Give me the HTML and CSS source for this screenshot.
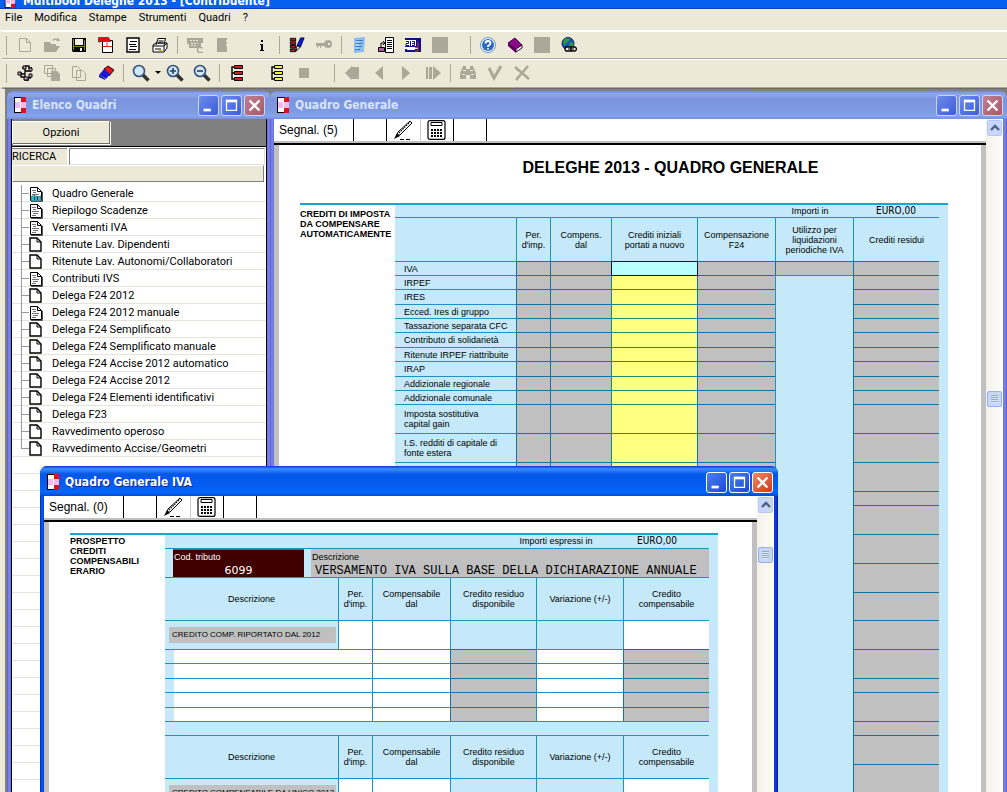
FILE: index.html
```html
<!DOCTYPE html>
<html lang="it">
<head>
<meta charset="utf-8">
<title>Multibool Deleghe 2013 - [Contribuente]</title>
<link rel="stylesheet" href="styles.css">
</head>
<body>
<svg class="defs" aria-hidden="true">
  <symbol id="logo" viewBox="0 0 12 16"><path fill="#000" d="M0 0h12v16H0z"/><path fill="#fff" d="M1 1h10v14H1z"/><path fill="#e01020" d="M7 0h5v5H7zM7 11h5v5H7z"/><path fill="#f6b8ea" d="M1 5h11v6H1z"/><path fill="#fff" d="M6 1h1v14H6z"/></symbol>
  <symbol id="min" viewBox="0 0 21 21"><path fill="#fff" d="M5 14h8v3H5z"/></symbol>
  <symbol id="max" viewBox="0 0 21 21"><path fill="none" stroke="#fff" stroke-width="1.400" d="M5 5h11v11H5z"/><path fill="#fff" d="M4.300 4h12.400v3H4.300z"/></symbol>
  <symbol id="close" viewBox="0 0 21 21"><path stroke="#fff" stroke-width="2.600" d="M5 5l11 11m0-11l-11 11"/></symbol>
  <symbol id="page" viewBox="0 0 14 16"><path fill="#fff" stroke="#000" stroke-width="1.400" d="M1 1h7l4 4v9H1z"/><path fill="none" stroke="#000" d="M8 1v4h4"/></symbol>
  <symbol id="text" viewBox="0 0 14 16"><path fill="#fff" stroke="#000" d="M1.500 1.500h7l4 4v9h-11z"/><path fill="none" stroke="#000" d="M8.500 1.500v4h4"/><path fill="none" stroke="#555" d="M13.500 6v9.500H2"/><path stroke="#777" d="M3 4.500h4M4 6.500h3M3 8.500h7M4 10.500h5M3 12.500h4"/></symbol>
  <symbol id="pencil" viewBox="0 0 20 20"><path fill="#fff" stroke="#000" d="M3 15l1-3L16 1l2 2L6 15z"/><path stroke="#000" stroke-width="1.200" stroke-dasharray="1.500 1" d="M5 13L16 2"/><path fill="#000" d="M0 19l3-6 3 3z"/><path stroke="#000" d="M6 19.500h4m2 0h4"/></symbol>
  <symbol id="calc" viewBox="0 0 20 20"><rect x="1" y="0.600" width="17" height="18.800" rx="2" fill="#fff" stroke="#000" stroke-width="1.200"/><path fill="none" stroke="#000" d="M4 2.500h11v3H4z"/><path stroke="#000" stroke-width="2" stroke-dasharray="2 1" d="M4 10h11M4 13h11M4 16h11"/></symbol>
  <symbol id="up" viewBox="0 0 10 8"><path fill="none" stroke="#4d6185" stroke-width="2.400" d="M1 6l4-4 4 4"/></symbol>
  <symbol id="zoom" viewBox="0 0 18 18"><path stroke="#333" stroke-width="3.500" d="M11 11l5.500 5.500"/><circle cx="7" cy="7" r="5.500" fill="#cfe6fb" stroke="#33507a" stroke-width="1.600"/></symbol>
  <symbol id="square" viewBox="0 0 16 16"><path fill="#aca899" d="M0 0h16v16H0z"/></symbol>
  <symbol id="rack" viewBox="0 0 16 16"><path fill="none" stroke="#000" stroke-width="1.400" d="M5 2H3v12h2M3 8h2"/><path fill="currentColor" stroke="#000" d="M5.500.500h8v3h-8zM5.500 6.500h8v3h-8zM5.500 12.500h8v3h-8z"/></symbol>
</svg>

<header class="app-title"><svg class="app-logo"><use href="#logo"/></svg><span>Multibool Deleghe 2013 - [Contribuente]</span></header>

<nav class="menu">
  <button>File</button><button>Modifica</button><button>Stampe</button><button>Strumenti</button><button>Quadri</button><button>?</button>
</nav>

<div class="toolbar" role="toolbar" aria-label="Principale">
  <button aria-label="Nuovo"><svg viewBox="0 0 16 16"><path fill="none" stroke="#aca899" d="M2.500 1.500h7l4 4v9h-11zM9.500 1.500v4h4"/></svg></button>
  <button aria-label="Apri"><svg viewBox="0 0 16 16"><path fill="#aca899" d="M0 5h6l1 2h5v2h4l-4 6H0zM8 3q3-3 6-1V0l2 4h-4l1-1q-2-1-4 1z"/></svg></button>
  <button aria-label="Salva"><svg viewBox="0 0 16 16"><path fill="#000" d="M1 1h14v14H2l-1-1z"/><path fill="#8a8a18" d="M2 2h1v11H2zM13 3h1v10h-1zM3 9h10v1H3z"/><path fill="#f3f1e4" d="M4 2h8v6H4zM9 11h2v3H9z"/></svg></button>
  <button aria-label="PDF"><svg viewBox="0 0 16 16"><path fill="#fff" stroke="#000" d="M4.500 3.500h10v12h-10z"/><path fill="#e01010" stroke="#600" stroke-width=".6" d="M.500.500h10l2 4H4L.500 5z"/><path fill="none" stroke="#d22" d="M5 9.500h9m-5-4v4"/></svg></button>
  <button aria-label="Elenco"><svg viewBox="0 0 16 16"><path fill="#fff" stroke="#000" stroke-width="1.400" d="M2 1h12v14H2z"/><path stroke="#000" d="M5 4.500h7M4 7.500h7M5 9.500h7M4 12.500h7"/></svg></button>
  <button aria-label="Stampa"><svg viewBox="0 0 16 16"><path fill="#fff" stroke="#000" d="M4 8l2-6.500h7.500L12 8M1 8l3-2h11v5l-3 4H1z"/><path fill="none" stroke="#000" d="M1 9h11v5m0-5l3-3M6.500 4h5M6 6h5M3 12h6"/><path stroke="#bb0" d="M7 13.500h3"/></svg></button>
  <i class="sep"></i>
  <button aria-label="Calcola"><svg viewBox="0 0 16 16"><path fill="#aca899" d="M0 1h16v5h-2v5H2V7H0z"/><path stroke="#ece9d8" d="M3 3.500h9M4 6.500h7M4 8.500h6" stroke-dasharray="2 1"/><path fill="none" stroke="#aca899" stroke-width="1.500" d="M15.500 11q-5-2-5 2t5 2"/></svg></button>
  <button aria-label="Registro"><svg viewBox="0 0 16 16"><path fill="#aca899" d="M3 1h10v2h-1v2h1v2h-1v2h1v6H3z"/></svg></button>
  <i class="gap"></i>
  <button aria-label="Informazioni"><svg viewBox="0 0 16 16"><path fill="#000" d="M7 3h2v2H7zM6 7h3v6h1v1H6v-1h1V8H6z"/></svg></button>
  <i class="sep"></i>
  <button aria-label="Modifica elenco"><svg viewBox="0 0 18 18"><path fill="#b02020" stroke="#000" d="M1.500 1.500h6v3h-6zM1.500 5.500h6v3h-6zM1.500 9.500h6v3h-6zM1.500 13.500h6v3h-6z"/><path fill="#1018d8" stroke="#000060" d="M13 1h4l-4 10-4-1z"/><path fill="#fff" stroke="#000" d="M9 10l4 1-5 5z"/></svg></button>
  <button aria-label="Chiave"><svg viewBox="0 0 16 16"><path fill="#aca899" fill-rule="evenodd" d="M0 6h8q1-3 4-3 4 0 4 4t-4 4q-3 0-4-2H5v2H4V9H2v2H1V9H0zM12 6v2h2V6z"/></svg></button>
  <i class="sep"></i>
  <button aria-label="Archivio"><svg viewBox="0 0 16 16"><path fill="#8fbdf0" d="M3 1l11-1-1 15-10 1z"/><path stroke="#3a78c8" d="M5 3.500h7M4.500 6.500h7M4 9.500h7M4 12.500h5"/><path stroke="#d5e8fc" d="M5 5h3M5 8h3m-4 3h3"/></svg></button>
  <button aria-label="Documento"><svg viewBox="0 0 16 16"><path fill="#fff" stroke="#000" d="M7.500.500h8v15h-8z"/><path stroke="#000" d="M9 3.500h5M9 5.500h5M9 7.500h5M9 9.500h5M9 11.500h5"/><path fill="#b060a0" stroke="#000" d="M.500 10.500h6v4h-6z"/><path fill="none" stroke="#000" d="M3 10V6h4M5 4l2 2-2 2"/></svg></button>
  <button aria-label="Codici"><svg viewBox="0 0 16 16"><path fill="#10108a" d="M0 1h16v14H0z"/><path fill="#fff" d="M0 3h11v6H0zM0 10h13v2H0zM2 12h8v1H2z"/><path fill="none" stroke="#10108a" d="M1 4.500h2.500v2H1v2h3M5.500 4v5M7 4.500h2.500v4H7m0-2h3"/><path fill="none" stroke="#e03030" d="M10 10.500h3V5M10 14h3v-3"/></svg></button>
  <button aria-label="Vuoto"><svg><use href="#square"/></svg></button>
  <i class="gap"></i>
  <i class="sep"></i>
  <button aria-label="Guida"><svg viewBox="0 0 16 16"><circle cx="8" cy="8" r="7.500" fill="#fff" stroke="#5f92d4"/><circle cx="8" cy="8" r="6" fill="#2a68c6"/><path fill="none" stroke="#fff" stroke-width="1.800" d="M5.500 6.500q0-2.500 2.500-2.500t2.500 2Q10.500 7.500 8 9v1m0 1v1.500"/></svg></button>
  <button aria-label="Manuale"><svg viewBox="0 0 16 16"><path fill="#8a0a8a" stroke="#400040" d="M1 6l7-5 7 7-6 4z"/><path fill="#fff" stroke="#303" d="M9 12l6-4v3l-6 4z"/><path fill="#5a005a" d="M1 6l8 6v4L1 9z"/></svg></button>
  <button aria-label="Vuoto"><svg><use href="#square"/></svg></button>
  <button aria-label="Internet"><svg viewBox="0 0 16 16"><circle cx="7" cy="6.500" r="6" fill="#1c50c0" stroke="#102060"/><path fill="#2a9a3a" d="M3 2q4-2 6 0L7 5 5 6 4 9 2 6zM9 5l4 1-2 5-3-2z"/><path fill="#ece9d8" stroke="#000" stroke-width="1.300" d="M5 10h5v4H5q-2-2 0-4zM10 10h4q3 2 0 4h-4z"/><path stroke="#000" d="M7 12h6"/></svg></button>
</div>

<div class="toolbar" role="toolbar" aria-label="Quadri">
  <button aria-label="Struttura"><svg viewBox="0 0 16 16"><path fill="none" stroke="#000" stroke-width="1.300" d="M5 3h3v3h6M8 6v7h6M8 9H4m4-8h4v2h3M4 7v5h4v3h4"/><path fill="#c9a0c9" stroke="#000" d="M1 7h3v3H1zM6 1h3v3H6zM12 3h3v3h-3zM12 9h3v3h-3zM7 12h4v3H7z"/></svg></button>
  <button aria-label="Copia tutto"><svg viewBox="0 0 16 16"><path fill="#ece9d8" stroke="#aca899" d="M.500.500h8v8h-8zM3.500 3.500h8v8h-8z"/><path fill="#aca899" d="M7 6h6l3 3v7H7z"/></svg></button>
  <button aria-label="Copia"><svg viewBox="0 0 16 16"><path fill="#ece9d8" stroke="#aca899" d="M1.500 1.500h5l3 3v8h-8zM5.500 5.500h6l3 3v7h-9z"/></svg></button>
  <button aria-label="Cancella"><svg viewBox="0 0 16 16"><path fill="#e01818" stroke="#300" d="M6 4l4-3 6 4-5 6z"/><path fill="#1818d8" d="M6 4l6 5-4 5-7-4z"/><path fill="#000080" d="M1 10l6 4v1l-6-3z"/></svg></button>
  <i class="sep"></i>
  <button aria-label="Zoom"><svg class="big"><use href="#zoom"/></svg></button>
  <button class="drop" aria-label="Opzioni zoom"></button>
  <button aria-label="Ingrandisci"><svg class="big" viewBox="0 0 18 18"><use href="#zoom"/><path stroke="#223f70" stroke-width="1.600" d="M4 7h6M7 4v6"/></svg></button>
  <button aria-label="Riduci"><svg class="big" viewBox="0 0 18 18"><use href="#zoom"/><path stroke="#223f70" stroke-width="1.600" d="M4 7h6"/></svg></button>
  <i class="sep"></i>
  <button class="red" aria-label="Elenco rosso"><svg><use href="#rack"/></svg></button>
  <i class="gap"></i>
  <button class="yellow-ink" aria-label="Elenco giallo"><svg><use href="#rack"/></svg></button>
  <button aria-label="Ferma"><svg class="small" viewBox="0 0 16 16"><use href="#square"/></svg></button>
  <i class="gap"></i>
  <i class="sep"></i>
  <button aria-label="Primo"><svg viewBox="0 0 16 16"><path fill="#aca899" d="M8 1v14L1 8zM8 2h7v12H8z"/></svg></button>
  <button aria-label="Precedente"><svg viewBox="0 0 16 16"><path fill="#aca899" d="M12 1v14L4 8z"/></svg></button>
  <button aria-label="Successivo"><svg viewBox="0 0 16 16"><path fill="#aca899" d="M4 1v14l8-7z"/></svg></button>
  <button aria-label="Ultimo"><svg viewBox="0 0 16 16"><path fill="#aca899" d="M1 2h2v12H1zM4 2h3v12H4zM8 1v14l8-7z"/></svg></button>
  <i class="sep"></i>
  <button aria-label="Cerca"><svg viewBox="0 0 16 16"><path fill="#aca899" d="M3 1h3v3h4V1h3l3 8v5h-6v-4H6v4H0V9z"/><path stroke="#ece9d8" d="M3 5.500h3m4 0h3M2 9.500h3m6 0h3"/></svg></button>
  <button aria-label="Conferma"><svg viewBox="0 0 16 16"><path fill="none" stroke="#aca899" stroke-width="3" d="M2 3l5 10 7-12"/></svg></button>
  <button aria-label="Annulla"><svg viewBox="0 0 16 16"><path stroke="#aca899" stroke-width="2.600" d="M1 2l14 12M14 1L2 15"/></svg></button>
</div>

<main class="desk">
  <section class="win win-list">
    <header class="bar"><svg class="logo"><use href="#logo"/></svg><h2>Elenco Quadri</h2>
      <button aria-label="Riduci a icona"><svg><use href="#min"/></svg></button><button aria-label="Ingrandisci"><svg><use href="#max"/></svg></button><button class="x" aria-label="Chiudi"><svg><use href="#close"/></svg></button></header>
    <div class="body list-body">
      <div class="options"><button>Opzioni</button></div>
      <div class="search"><label for="q">RICERCA</label><input id="q" type="text"></div>
      <div class="list-head"></div>
      <ul class="tree">
        <li><svg viewBox="0 0 14 16"><use href="#text"/><path fill="#30c0c8" stroke="#456" stroke-width=".7" d="M2 11l3-2 3 2 4-1v5H2z"/><path stroke="#127" d="M5.500 11v3m3-3v3"/></svg>Quadro Generale</li>
        <li><svg><use href="#text"/></svg>Riepilogo Scadenze</li>
        <li><svg><use href="#text"/></svg>Versamenti IVA</li>
        <li><svg><use href="#page"/></svg>Ritenute Lav. Dipendenti</li>
        <li><svg><use href="#page"/></svg>Ritenute Lav. Autonomi/Collaboratori</li>
        <li><svg><use href="#text"/></svg>Contributi IVS</li>
        <li><svg><use href="#page"/></svg>Delega F24 2012</li>
        <li><svg><use href="#text"/></svg>Delega F24 2012 manuale</li>
        <li><svg><use href="#page"/></svg>Delega F24 Semplificato</li>
        <li><svg><use href="#page"/></svg>Delega F24 Semplificato manuale</li>
        <li><svg><use href="#page"/></svg>Delega F24 Accise 2012 automatico</li>
        <li><svg><use href="#page"/></svg>Delega F24 Accise 2012</li>
        <li><svg><use href="#page"/></svg>Delega F24 Elementi identificativi</li>
        <li><svg><use href="#page"/></svg>Delega F23</li>
        <li><svg><use href="#page"/></svg>Ravvedimento operoso</li>
        <li><svg><use href="#page"/></svg>Ravvedimento Accise/Geometri</li>
      </ul>
    </div>
  </section>

  <section class="win win-main">
    <header class="bar"><svg class="logo"><use href="#logo"/></svg><h2>Quadro Generale</h2>
      <button aria-label="Riduci a icona"><svg><use href="#min"/></svg></button><button aria-label="Ingrandisci"><svg><use href="#max"/></svg></button><button class="x" aria-label="Chiudi"><svg><use href="#close"/></svg></button></header>
    <div class="body split">
      <div class="view">
        <div class="tools"><button class="segnal">Segnal. (5)</button><button aria-label="Vuoto"></button><button class="light" aria-label="Modifica"><svg><use href="#pencil"/></svg></button><button aria-label="Calcolatrice"><svg><use href="#calc"/></svg></button><button aria-label="Vuoto"></button></div>
        <div class="sheet sheet-main">
          <h1>DELEGHE 2013 - QUADRO GENERALE</h1>
          <div class="form">
            <h3 class="main-label">CREDITI DI IMPOSTA<br>DA COMPENSARE<br>AUTOMATICAMENTE</h3>
            <div class="panel">
              <div class="currency"><span>Importi in</span><b>EURO,00</b></div>
              <table class="grid credits">
                <colgroup><col class="c121"><col class="c34"><col class="c61"><col class="c86"><col class="c78"><col class="c78"><col class="c86"></colgroup>
                <thead><tr><th></th><th>Per.<br>d'imp.</th><th>Compens.<br>dal</th><th>Crediti iniziali<br>portati a nuovo</th><th>Compensazione<br>F24</th><th>Utilizzo per<br>liquidazioni<br>periodiche IVA</th><th>Crediti residui</th></tr></thead>
                <tbody>
                  <tr class="h14"><td>IVA</td><td class="g"></td><td class="g"></td><td class="active"><input aria-label="IVA"></td><td class="g"></td><td class="g"></td><td class="g"></td></tr>
                  <tr class="h14"><td>IRPEF</td><td class="g"></td><td class="g"></td><td class="y"><input aria-label="IRPEF"></td><td class="g"></td><td rowspan="26"></td><td class="g"></td></tr>
                  <tr class="h15"><td>IRES</td><td class="g"></td><td class="g"></td><td class="y"><input aria-label="IRES"></td><td class="g"></td><td class="g"></td></tr>
                  <tr class="h14"><td>Ecced. Ires di gruppo</td><td class="g"></td><td class="g"></td><td class="y"><input aria-label="Ecced. Ires di gruppo"></td><td class="g"></td><td class="g"></td></tr>
                  <tr class="h14"><td>Tassazione separata CFC</td><td class="g"></td><td class="g"></td><td class="y"><input aria-label="Tassazione separata CFC"></td><td class="g"></td><td class="g"></td></tr>
                  <tr class="h15"><td>Contributo di solidarietà</td><td class="g"></td><td class="g"></td><td class="y"><input aria-label="Contributo di solidarietà"></td><td class="g"></td><td class="g"></td></tr>
                  <tr class="h14"><td>Ritenute IRPEF riattribuite</td><td class="g"></td><td class="g"></td><td class="y"><input aria-label="Ritenute IRPEF riattribuite"></td><td class="g"></td><td class="g"></td></tr>
                  <tr class="h15"><td>IRAP</td><td class="g"></td><td class="g"></td><td class="y"><input aria-label="IRAP"></td><td class="g"></td><td class="g"></td></tr>
                  <tr class="h14"><td>Addizionale regionale</td><td class="g"></td><td class="g"></td><td class="y"><input aria-label="Addizionale regionale"></td><td class="g"></td><td class="g"></td></tr>
                  <tr class="h14"><td>Addizionale comunale</td><td class="g"></td><td class="g"></td><td class="y"><input aria-label="Addizionale comunale"></td><td class="g"></td><td class="g"></td></tr>
                  <tr class="h29"><td>Imposta sostitutiva<br>capital gain</td><td class="g"></td><td class="g"></td><td class="y"><input aria-label="Imposta sostitutiva capital gain"></td><td class="g"></td><td class="g"></td></tr>
                  <tr class="h29"><td>I.S. redditi di capitale di<br>fonte estera</td><td class="g"></td><td class="g"></td><td class="y"><input aria-label="I.S. redditi di capitale"></td><td class="g"></td><td class="g"></td></tr>
                  <tr class="h29"><td></td><td class="g"></td><td class="g"></td><td class="y"></td><td class="g"></td><td class="g"></td></tr>
                  <tr class="h14"><td></td><td class="g"></td><td class="g"></td><td class="y"></td><td class="g"></td><td class="g"></td></tr>
                  <tr class="h29"><td></td><td class="g"></td><td class="g"></td><td class="y"></td><td class="g"></td><td class="g"></td></tr>
                  <tr class="h29"><td></td><td class="g"></td><td class="g"></td><td class="y"></td><td class="g"></td><td class="g"></td></tr>
                  <tr class="h29"><td></td><td class="g"></td><td class="g"></td><td class="y"></td><td class="g"></td><td class="g"></td></tr>
                  <tr class="h28"><td></td><td class="g"></td><td class="g"></td><td class="y"></td><td class="g"></td><td class="g"></td></tr>
                  <tr class="h29"><td></td><td class="g"></td><td class="g"></td><td class="y"></td><td class="g"></td><td class="g"></td></tr>
                  <tr class="h29"><td></td><td class="g"></td><td class="g"></td><td class="y"></td><td class="g"></td><td class="g"></td></tr>
                  <tr class="h14"><td></td><td class="g"></td><td class="g"></td><td class="y"></td><td class="g"></td><td class="g"></td></tr>
                  <tr class="h29"><td></td><td class="g"></td><td class="g"></td><td class="y"></td><td class="g"></td><td class="g"></td></tr>
                  <tr class="h14"><td></td><td class="g"></td><td class="g"></td><td class="y"></td><td class="g"></td><td class="g"></td></tr>
                  <tr class="h29"><td></td><td class="g"></td><td class="g"></td><td class="y"></td><td class="g"></td><td class="g"></td></tr>
                  <tr class="h29"><td></td><td class="g"></td><td class="g"></td><td class="y"></td><td class="g"></td><td class="g"></td></tr>
                  <tr class="h29"><td></td><td class="g"></td><td class="g"></td><td class="y"></td><td class="g"></td><td class="g"></td></tr>
                  <tr class="h29"><td></td><td class="g"></td><td class="g"></td><td class="y"></td><td class="g"></td><td class="g"></td></tr>
                </tbody>
              </table>
            </div>
          </div>
        </div>
      </div>
      <div class="scroll"><button aria-label="Su"><svg><use href="#up"/></svg></button><i class="thumb thumb-main"></i></div>
    </div>
  </section>

  <section class="win win-iva">
    <header class="bar"><svg class="logo"><use href="#logo"/></svg><h2>Quadro Generale IVA</h2>
      <button aria-label="Riduci a icona"><svg><use href="#min"/></svg></button><button aria-label="Ingrandisci"><svg><use href="#max"/></svg></button><button class="x" aria-label="Chiudi"><svg><use href="#close"/></svg></button></header>
    <div class="body split">
      <div class="view">
        <div class="tools"><button class="segnal">Segnal. (0)</button><button aria-label="Vuoto"></button><button class="light" aria-label="Modifica"><svg><use href="#pencil"/></svg></button><button aria-label="Calcolatrice"><svg><use href="#calc"/></svg></button><button aria-label="Vuoto"></button></div>
        <div class="sheet sheet-iva">
          <div class="form">
            <h3 class="iva-label">PROSPETTO<br>CREDITI<br>COMPENSABILI<br>ERARIO</h3>
            <div class="panel">
              <div class="currency"><span>Importi espressi in</span><b>EURO,00</b></div>
              <div class="tribute">
                <div class="code"><span>Cod. tributo</span><strong>6099</strong></div>
                <div class="desc"><span>Descrizione</span><strong>VERSAMENTO IVA SULLA BASE DELLA DICHIARAZIONE ANNUALE</strong></div>
              </div>
              <table class="grid iva">
                <colgroup><col class="c9"><col class="c164"><col class="c34"><col class="c78"><col class="c86"><col class="c87"><col class="c86"></colgroup>
                <thead><tr><th colspan="2">Descrizione</th><th>Per.<br>d'imp.</th><th>Compensabile<br>dal</th><th>Credito residuo<br>disponibile</th><th>Variazione (+/-)</th><th>Credito<br>compensabile</th></tr></thead>
                <tbody>
                  <tr class="h29"><td colspan="2" class="tag"><span>CREDITO COMP. RIPORTATO DAL 2012</span></td><td class="w"></td><td class="w"></td><td></td><td></td><td class="w"></td></tr>
                  <tr class="h14"><td></td><td colspan="2" class="w plain"></td><td class="w"></td><td class="g"></td><td class="w"></td><td class="g"></td></tr>
                  <tr class="h15"><td></td><td colspan="2" class="w plain"></td><td class="w"></td><td class="g"></td><td class="w"></td><td class="g"></td></tr>
                  <tr class="h14"><td></td><td colspan="2" class="w plain"></td><td class="w"></td><td class="g"></td><td class="w"></td><td class="g"></td></tr>
                  <tr class="h15"><td></td><td colspan="2" class="w plain"></td><td class="w"></td><td class="g"></td><td class="w"></td><td class="g"></td></tr>
                  <tr class="h14"><td></td><td colspan="2" class="w plain"></td><td class="w"></td><td class="g"></td><td class="w"></td><td class="g"></td></tr>
                  <tr class="h14"><td colspan="7"></td></tr>
                  <tr class="again"><th colspan="2">Descrizione</th><th>Per.<br>d'imp.</th><th>Compensabile<br>dal</th><th>Credito residuo<br>disponibile</th><th>Variazione (+/-)</th><th>Credito<br>compensabile</th></tr>
                  <tr class="h29"><td colspan="2" class="tag"><span>CREDITO COMPENSABILE DA UNICO 2013</span></td><td class="w"></td><td class="w"></td><td></td><td></td><td class="w"></td></tr>
                </tbody>
              </table>
            </div>
          </div>
        </div>
      </div>
      <div class="scroll"><button aria-label="Su"><svg><use href="#up"/></svg></button><i class="thumb thumb-iva"></i></div>
    </div>
  </section>
</main>
</body>
</html>
```
FILE: styles.css
```css
* { box-sizing: border-box; }
html, body { height: 100%; }
body {
  margin: 0;
  display: flex;
  flex-direction: column;
  overflow: hidden;
  background: #ece9d8;
  font: 11px/17px Roboto, "DejaVu Sans Condensed", sans-serif;
  color: #000;
}
button { border: 0; padding: 0; margin: 0; background: none; font: inherit; color: inherit; }
h1, h2, h3, ul { margin: 0; padding: 0; }
ul { list-style: none; }
.defs { position: absolute; width: 0; height: 0; }

.app-title {
  flex: none;
  display: flex;
  align-items: flex-end;
  gap: 7px;
  height: 9px;
  padding-left: 4px;
  overflow: hidden;
  background: #0560f0;
  border-bottom: 1px solid #0444c0;
  color: #fff;
  font: bold 12px/13px "DejaVu Sans Condensed", sans-serif;
  white-space: nowrap;
}
.app-logo { width: 12px; height: 14px; }

.menu { flex: none; display: flex; align-items: flex-start; gap: 12px; height: 22px; padding-left: 5px; border-bottom: 1px solid #fff; line-height: 18px; }
.toolbar {
  flex: none;
  display: flex;
  align-items: center;
  height: 29px;
  margin-left: 2px;
  padding: 0 0 2px 9px;
  border-top: 1px solid #fff;
  border-bottom: 1px solid #aca899;
  background: linear-gradient(#aca899, #aca899) 4px 4px / 1px 19px no-repeat;
}
.menu + .toolbar { height: 28px; padding-bottom: 0; }
.toolbar button { width: 27px; height: 24px; display: grid; place-items: center; }
.toolbar svg { width: 16px; height: 16px; }
.toolbar svg.big { width: 18px; height: 18px; }
.toolbar svg.small { width: 10px; height: 10px; }
.toolbar .drop { width: 7px; }
.drop::before { content: ""; border: 3px solid transparent; border-top-color: #000; border-bottom: 0; }
.red { color: #d02020; }
.yellow-ink { color: #f0f040; }
.sep { width: 8px; height: 18px; background: linear-gradient(#aca899, #aca899) 4px 0 / 1px 18px no-repeat; }
.gap { width: 13px; }

.desk {
  flex: 1;
  position: relative;
  min-height: 0;
  overflow: hidden;
  background: #808080;
  border-left: 5px solid #ece9d8;
  border-top: 1px solid #6a6a6a;
}
.win {
  position: absolute;
  display: flex;
  flex-direction: column;
  padding: 0 4px;
  border-radius: 7px 7px 0 0;
  background: linear-gradient(90deg, #5a54d8, #7a8cf0 2px, #6a6cd0 4px, #6a6cd0 calc(100% - 4px), #7a8cf0 calc(100% - 2px), #5a54c8);
}
.win-list { left: 2px; top: 2px; bottom: 0; width: 264px; }
.win-main { left: 265px; right: 0; top: 2px; bottom: 0; }
.win-iva { left: 35px; top: 377px; bottom: 0; width: 738px; background: linear-gradient(90deg, #0020c0, #1060f0 2px, #0038d8 4px, #0038d8 calc(100% - 4px), #1040e0 calc(100% - 2px), #001490); }

.bar {
  flex: none;
  display: flex;
  align-items: center;
  gap: 2px;
  height: 28px;
  margin: 0 -4px;
  padding: 0 6px 0 7px;
  border-radius: 7px 7px 0 0;
  background: linear-gradient(#7288dc, #8fa8ee 3px, #7c94de 8px, #7e9ae4 20px, #84a4ec 25px, #7a8edc);
}
.win-main .bar { padding-right: 4px; }
.bar h2 { flex: 1; padding-left: 4px; color: #d8e4f8; font: bold 12px/20px "DejaVu Sans Condensed", sans-serif; white-space: nowrap; }
.bar .logo { width: 12px; height: 16px; }
.bar button { width: 21px; height: 21px; border: 1px solid #c8d4f8; border-radius: 3px; background: linear-gradient(135deg, #6c8cec, #3c5cd8); }
.bar button svg { display: block; width: 19px; height: 19px; }
.bar .x { background: linear-gradient(135deg, #c08090, #a85868); }
.win-iva .bar { height: 30px; padding-top: 2px; padding-right: 5px; background: linear-gradient(#0a3ac8, #3a90ff 3px, #0458e8 8px, #055cf0 20px, #0468fc 26px, #0348d0); }
.win-iva .bar h2 { color: #fff; text-shadow: 1px 1px #0a2a88; }
.win-iva .bar button { border-color: #fff; background: linear-gradient(135deg, #4a80f0, #1c48d0); }
.win-iva .bar .x { background: linear-gradient(135deg, #f08868, #d03818); }

.body { flex: 1; min-height: 0; overflow: hidden; background: #fff; }
.split { display: flex; }
.view { flex: 1; min-width: 0; display: flex; flex-direction: column; }

.list-body { display: flex; flex-direction: column; border-left: 1px solid #000; border-right: 1px solid #000; }
.options { flex: none; height: 28px; padding: 2px 0 0; background: #808080; border-bottom: 1px solid #000; }
.options button { display: block; width: 98px; height: 23px; background: #ece9d8; border: 1px solid #fff; border-right-color: #716f64; border-bottom-color: #716f64; box-shadow: 1px 1px #fff; }
.search { flex: none; display: flex; height: 18px; padding: 1px 1px 0 0; }
.search label { width: 55px; background: #ece9d8; border-top: 1px solid #808080; line-height: 16px; }
.search input { flex: 1; min-width: 0; margin-left: 2px; padding: 0 2px; border: 1px solid #808080; border-right-color: #ddd; border-bottom-color: #ddd; background: #fff; font: inherit; }
.list-head { flex: none; height: 17px; margin: 0 2px 0 0; background: #ece9d8; border: 1px solid #fff; border-right-color: #808080; border-bottom-color: #808080; }
.tree { flex: 1; padding-top: 3px; background: repeating-linear-gradient(#fff 0 16px, #e6e4d8 16px 17px) 0 3px; }
.tree li { display: flex; align-items: center; gap: 9px; height: 17px; padding-left: 17px; background: linear-gradient(#999, #999) 9px 0 / 1px 17px no-repeat, linear-gradient(#999, #999) 9px 8px / 8px 1px no-repeat; white-space: nowrap; }
.tree li:last-child { background-size: 1px 8px, 8px 1px; }
.tree svg { flex: none; width: 14px; height: 16px; }

.tools { flex: none; display: flex; height: 24px; border-bottom: 2px solid #c0c0c0; }
.tools button { width: 33px; border-right: 1px solid #000; display: grid; place-items: center; }
.tools .light { width: 34px; border-right-color: #ccc; }
.tools .segnal { width: 80px; padding-left: 5px; justify-content: start; font: 12px/22px "Liberation Sans", sans-serif; }
.tools svg { width: 20px; height: 20px; }

.sheet { flex: 1; min-height: 0; overflow: hidden; border-top: 2px solid #000; background: #fff; box-shadow: inset 5px 0 #c0c0c0, inset -5px 0 #c0c0c0; font-family: "Liberation Sans", Arial, sans-serif; }
.sheet-main { padding: 13px 38px 0 26px; }
.sheet-iva { padding: 11px 39px 0 26px; }
.sheet h1 { height: 45px; padding-left: 93px; font-size: 16px; line-height: 20px; text-align: center; white-space: nowrap; }
.form { display: flex; border-top: 2px solid #1aa5d2; }
.form h3 { flex: none; width: 95px; font-size: 9px; line-height: 10px; white-space: nowrap; }
.main-label { padding-top: 4px; }
.iva-label { padding-top: 1px; }
.panel { flex: 1; min-width: 0; padding-right: 9px; background: #c5e9f9; }
.currency { display: flex; justify-content: flex-end; height: 12px; font-size: 9px; line-height: 12px; }
.currency b { width: 86px; text-align: center; font: 10px/12px "DejaVu Sans Condensed", sans-serif; }
.currency span { width: 86px; text-align: center; }
.sheet-iva .currency { height: 13px; }
.sheet-iva .currency b { width: 104px; }
.sheet-iva .currency span { width: 98px; }

.grid { width: 100%; table-layout: fixed; border-spacing: 0; font-size: 9px; line-height: 10px; }
.grid th, .grid td { padding: 0; border: solid #1b93c4; border-width: 1px 0 0 1px; font-weight: 400; }
.grid tr > :first-child { border-left: 0; }
.grid th { height: 44px; }
.grid.iva th { height: 43px; }
.grid td { text-align: left; white-space: nowrap; }
.credits td:first-child { padding-left: 9px; }
.grid .g { background: #c0c0c0; border-color: #1572a5; }
.grid .w { background: #fff; }
.grid .plain { border-left: 0; }
.grid .y { background: #ffff80; border-color: #1a8a70; }
.grid .active { background: #b8ffff; border-color: #101830; }
.active input { outline: 1px solid #101830; }
.grid input { display: block; width: 100%; height: 13px; padding: 0 2px; border: 0; background: none; font: inherit; }
.h14 td { height: 14px; }
.h15 td { height: 15px; }
.h28 td { height: 28px; }
.h29 td { height: 29px; }
.c9 { width: 9px; }
.c34 { width: 34px; }
.c61 { width: 61px; }
.c78 { width: 78px; }
.c86 { width: 86px; }
.c87 { width: 87px; }
.grid .tag { padding: 0 2px 0 4px; }
.tag span { display: block; height: 16px; padding-left: 3px; background: #c0c0c0; font-size: 8px; line-height: 16px; }

.tribute { display: flex; gap: 7px; height: 29px; padding-left: 8px; border-top: 1px solid #1b93c4; font-size: 9px; line-height: 10px; }
.code { width: 131px; padding: 2px 1px 0; background: #400000; border-top: 1px solid #c04010; color: #fff; }
.desc { flex: 1; min-width: 0; padding: 3px 1px 0; background: #c0c0c0; }
.tribute span, .tribute strong { display: block; }
.tribute strong { padding: 3px 0 0 3px; font: 12px/12px "Liberation Mono", monospace; white-space: nowrap; }
.tribute .code strong { padding-left: 0; font: 11px/12px "DejaVu Sans", sans-serif; text-align: center; }

.scroll { flex: none; width: 17px; display: flex; flex-direction: column; align-items: center; background: linear-gradient(90deg, #f3f1ea, #fdfdfa); }
.scroll button { width: 15px; height: 16px; margin-top: 1px; display: grid; place-items: center; border: 1px solid #b4c8f0; border-radius: 2px; background: #c8d6fb; }
.scroll svg { width: 10px; height: 8px; }
.thumb { width: 15px; height: 16px; border: 1px solid #98b0e8; border-radius: 2px; background: repeating-linear-gradient(#8ca4e0 0 1px, #dce6fd 1px 2px) center / 7px 8px no-repeat, #c8d6fb; }
.thumb-main { margin-top: 255px; }
.thumb-iva { margin-top: 34px; }
```
